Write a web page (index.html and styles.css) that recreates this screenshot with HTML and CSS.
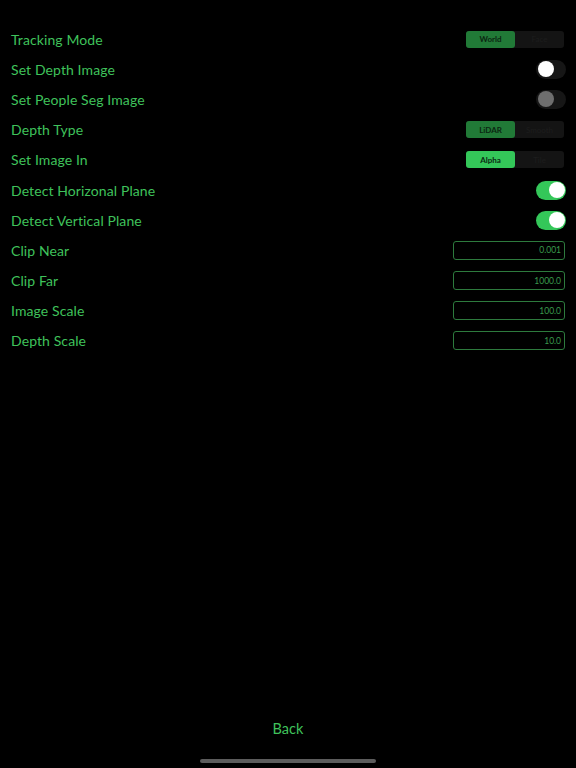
FILE: index.html
```html
<!DOCTYPE html>
<html>
<head>
<meta charset="utf-8">
<link rel="stylesheet" href="styles.css">
</head>
<body>
<div class="screen">
  <div class="list">
    <div class="row">
      <span class="label">Tracking Mode</span>
      <div class="seg"><span class="opt on dim">World</span><span class="opt">Face</span></div>
    </div>
    <div class="row">
      <span class="label">Set Depth Image</span>
      <div class="toggle"><span class="knob"></span></div>
    </div>
    <div class="row">
      <span class="label">Set People Seg Image</span>
      <div class="toggle disabled"><span class="knob"></span></div>
    </div>
    <div class="row">
      <span class="label">Depth Type</span>
      <div class="seg"><span class="opt on dim">LiDAR</span><span class="opt">Smooth</span></div>
    </div>
    <div class="row">
      <span class="label">Set Image In</span>
      <div class="seg"><span class="opt on">Alpha</span><span class="opt">Tile</span></div>
    </div>
    <div class="row">
      <span class="label">Detect Horizonal Plane</span>
      <div class="toggle checked"><span class="knob"></span></div>
    </div>
    <div class="row">
      <span class="label">Detect Vertical Plane</span>
      <div class="toggle checked"><span class="knob"></span></div>
    </div>
    <div class="row">
      <span class="label">Clip Near</span>
      <div class="field">0.001</div>
    </div>
    <div class="row">
      <span class="label">Clip Far</span>
      <div class="field">1000.0</div>
    </div>
    <div class="row">
      <span class="label">Image Scale</span>
      <div class="field">100.0</div>
    </div>
    <div class="row">
      <span class="label">Depth Scale</span>
      <div class="field">10.0</div>
    </div>
  </div>
  <div class="footer">
    <span class="back">Back</span>
    <div class="home"></div>
  </div>
</div>
</body>
</html>
```
FILE: styles.css
```css
html, body {
  margin: 0;
  padding: 0;
  background: #000;
}
.screen {
  width: 576px;
  height: 768px;
  display: flex;
  flex-direction: column;
  justify-content: space-between;
  font-family: "Lato", "Noto Sans", sans-serif;
  color: #3fc25b;
}
.list {
  padding: 24px 10px 0 11px;
  display: flex;
  flex-direction: column;
}
.row {
  height: 30.2px;
  display: flex;
  align-items: center;
  justify-content: space-between;
}
.label {
  font-size: 14px;
  letter-spacing: 0.1px;
}
.seg {
  width: 98px;
  height: 17px;
  background: #141414;
  border-radius: 3px;
  display: flex;
  margin-right: 2px;
}
.opt {
  flex: 1;
  font-size: 8px;
  display: flex;
  align-items: center;
  justify-content: center;
  color: #1d1d1d;
  border-radius: 3px;
}
.opt.on {
  background: #34c759;
  color: #0a2a12;
  font-weight: bold;
}
.opt.on.dim {
  background: #217a37;
  color: #0b2611;
}
.toggle {
  width: 30px;
  height: 19px;
  border-radius: 9.5px;
  background: #161616;
  display: flex;
  align-items: center;
  padding: 0 1.5px;
  box-sizing: border-box;
}
.knob {
  width: 16px;
  height: 16px;
  border-radius: 50%;
  background: #fff;
}
.toggle.disabled .knob {
  background: #6e6e6e;
}
.toggle.checked {
  background: #34c759;
  justify-content: flex-end;
}
.field {
  width: 112px;
  height: 19px;
  box-sizing: border-box;
  border: 1px solid #2d7a3d;
  border-radius: 3px;
  font-size: 8.5px;
  color: #3a9c4d;
  display: flex;
  align-items: center;
  justify-content: flex-end;
  padding-right: 3px;
  margin-right: 1px;
}
.footer {
  display: flex;
  flex-direction: column;
  align-items: center;
}
.back {
  font-size: 14.5px;
  color: #3fc25b;
  margin-bottom: 22px;
}
.home {
  width: 176px;
  height: 4px;
  border-radius: 2px;
  background: #5c5c5c;
  margin-bottom: 5px;
}
```
